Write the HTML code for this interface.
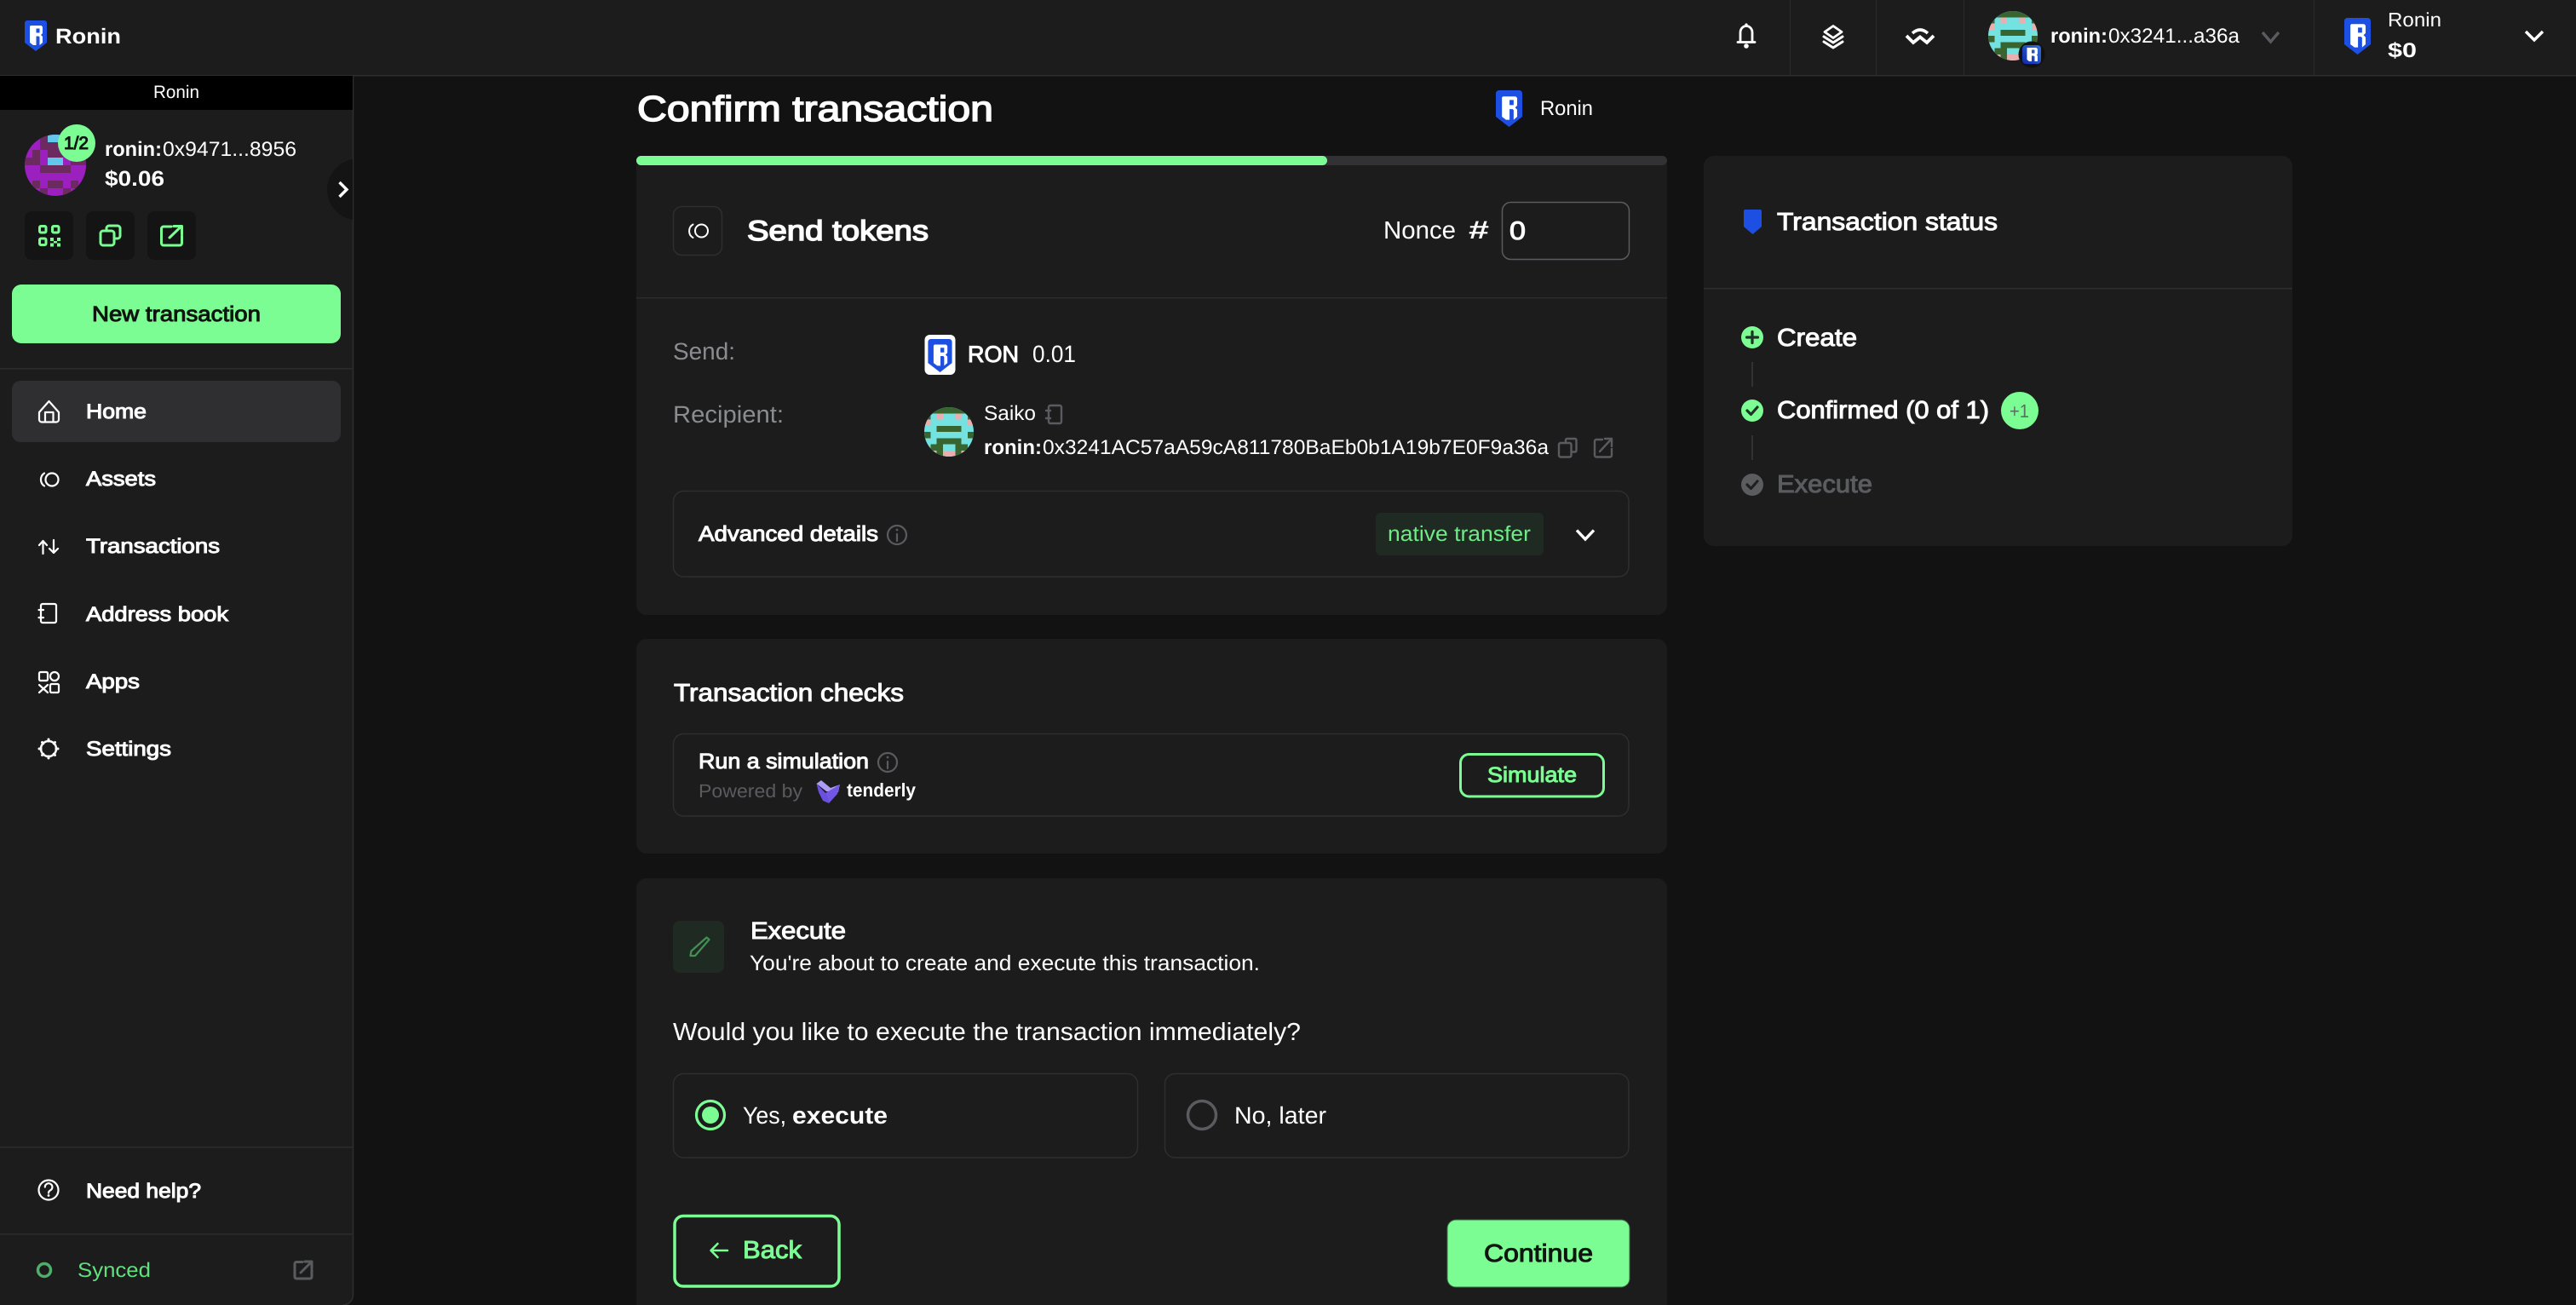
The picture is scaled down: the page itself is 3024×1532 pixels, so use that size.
<!DOCTYPE html>
<html lang="en"><head><meta charset="utf-8"><title>Confirm transaction</title>
<style>
html,body{margin:0;padding:0;background:#121212;width:3024px;height:1532px;overflow:hidden}
svg{display:block;position:absolute;left:0;top:0}
text{font-family:"Liberation Sans",sans-serif;fill:#fff;text-rendering:geometricPrecision}
.b{font-weight:700}
.m{stroke:#fff;stroke-width:1px}
.t{stroke:#fff;stroke-width:1.5px}
.g{fill:#7bfd93}
.gm{fill:#7bfd93;stroke:#7bfd93;stroke-width:1px}
.d{fill:#101510;stroke:#101510;stroke-width:1px}
.s{fill:none;stroke:#fff;stroke-linecap:round;stroke-linejoin:round}
.sg{fill:none;stroke:#7bfd93;stroke-width:3;stroke-linejoin:round;stroke-linecap:round}
.sd{fill:none;stroke:#5a5b5f;stroke-linejoin:round;stroke-linecap:round}
.ln{fill:#2b2b2b}
.bx{fill:none;stroke:#2e2e2e;stroke-width:1.5}
</style></head><body>
<svg width="3024" height="1532" viewBox="0 0 3024 1532" xmlns="http://www.w3.org/2000/svg">
<defs>
<linearGradient id="bl" x1="0" y1="1" x2="1" y2="0"><stop offset="0" stop-color="#1426a8"/><stop offset="1" stop-color="#2d74dc"/></linearGradient>
<symbol id="logo" viewBox="0 0 26 36">
<path d="M3 0H23a3 3 0 0 1 3 3V26L13 36 0 26V3a3 3 0 0 1 3-3z" fill="#1d50e2"/>
<path fill="#fff" fill-rule="evenodd" d="M6 7L7 6H19.5L21 7.5V15L19 17L21 19V26L17.5 29V19.5L16.5 18.5H13.5V29H10L6 26ZM13.5 9.5H17.5V14.5H13.5Z"/>
</symbol>
<clipPath id="cc"><circle cx="4" cy="4" r="4"/></clipPath>
<symbol id="teal" viewBox="0 0 8 8"><g clip-path="url(#cc)" shape-rendering="crispEdges">
<rect width="8" height="8" fill="#74e2e0"/>
<path fill="#38652f" d="M0 0h8v1H0zM0 1h1v1H0zM7 1h1v1H7zM2 3h4v1H2zM0 4h1v1H0zM7 4h1v1H7zM2 5h4v1H2zM1 6h2v1H1zM5 6h2v1H5zM2 7h1v1H2zM5 7h1v1H5z"/>
<path fill="#e9aeb0" d="M2 1h1v1H2zM5 1h1v1H5zM0 2h1v1H0zM7 2h1v1H7zM1 7h1v1H1zM3 7h2v1H3zM6 7h1v1H6z"/>
</g></symbol>
<symbol id="purple" viewBox="0 0 8 8"><g clip-path="url(#cc)" shape-rendering="crispEdges">
<rect width="8" height="8" fill="#9b20bf"/>
<path fill="#6c2a60" d="M2 0h1v1H2zM2 1h3v1H2zM1 2h1v1H1zM3 2h2v1H3zM0 3h2v1H0zM6 3h2v1H6zM2 4h4v1H2zM1 6h1v1H1zM3 6h2v1H3zM6 6h1v1H6zM2 7h1v1H2zM5 7h1v1H5z"/>
<path fill="#63c6ec" d="M3 0h2v1H3zM3 3h2v1H3z"/>
</g></symbol>
</defs>

<!-- header -->
<rect x="0" y="0" width="3024" height="88" fill="#1c1c1c"/>
<rect x="0" y="88" width="3024" height="1.5" fill="#2e2e2e"/>
<rect x="2101" y="0" width="1" height="88" class="ln"/>
<rect x="2202" y="0" width="1" height="88" class="ln"/>
<rect x="2305" y="0" width="1" height="88" class="ln"/>
<rect x="2716" y="0" width="1" height="88" class="ln"/>
<use href="#logo" x="29" y="24" width="26" height="36"/>
<text x="65" y="51" font-size="25" class="b" textLength="77" lengthAdjust="spacingAndGlyphs">Ronin</text>

<!-- bell -->
<path class="s" stroke-width="2.8" d="M2043 49V38a7 7.5 0 0 1 14 0V49"/>
<path class="s" stroke-width="2.8" d="M2040 49.500H2060"/>
<circle cx="2050" cy="54" r="2.800" fill="#fff"/>
<circle cx="2050" cy="29" r="1.600" fill="#fff"/>
<!-- layers -->
<path class="s" stroke-width="2.800" d="M2152 30.500L2162 37.500 2152 44.500 2142 37.500Z"/>
<path class="s" stroke-width="3" d="M2141 43L2152 50 2163 43M2141 49L2152 56 2163 49"/>
<!-- walletconnect -->
<path d="M2245 39Q2254 31 2263 39" fill="none" stroke="#fff" stroke-width="3.600"/>
<path d="M2238 42L2246 50 2254 43.500 2262 50 2270 42" fill="none" stroke="#fff" stroke-width="3.800" stroke-linejoin="miter"/>
<!-- account -->
<use href="#teal" x="2334" y="13" width="58" height="58"/>
<circle cx="2385" cy="64" r="15.500" fill="#111"/>
<rect x="2374" y="53" width="22" height="22" rx="4" fill="url(#bl)"/>
<path fill="#fff" fill-rule="evenodd" d="M2379.500 56H2390.500L2392 57.500V63L2391 64.500 2392 66V72H2388.500V66.500L2387.500 65.500H2385V72H2382L2379.500 70ZM2385 58.500H2388.500V62.500H2385Z"/>
<text x="2407" y="50" font-size="24" class="b" textLength="67" lengthAdjust="spacingAndGlyphs">ronin:</text>
<text x="2475" y="50" font-size="24" textLength="154" lengthAdjust="spacingAndGlyphs">0x3241...a36a</text>
<path d="M2656 38L2665.500 49 2675 38" fill="none" stroke="#5a5b5f" stroke-width="3.400"/>
<use href="#logo" x="2752" y="21" width="31" height="43"/>
<text x="2803" y="31" font-size="23" textLength="63" lengthAdjust="spacingAndGlyphs">Ronin</text>
<text x="2803" y="67" font-size="24" class="b" textLength="34" lengthAdjust="spacingAndGlyphs">$0</text>
<path d="M2965 37L2975 47 2985 37" fill="none" stroke="#fff" stroke-width="3.400"/>

<!-- sidebar -->
<path d="M0 89H414V1520a12 12 0 0 1-12 12H0Z" fill="#1c1c1c"/>
<path d="M414.500 89V1520a12 12 0 0 1-12 12" fill="none" stroke="#2e2e2e" stroke-width="1.500"/>
<rect x="0" y="89" width="414" height="40" fill="#000"/>
<text x="180" y="115" font-size="21" textLength="54" lengthAdjust="spacingAndGlyphs">Ronin</text>
<use href="#purple" x="29" y="158" width="72" height="72"/>
<circle cx="90" cy="168" r="22" fill="#7bfd93"/>
<text x="75" y="175" font-size="21" class="d" textLength="29" lengthAdjust="spacingAndGlyphs">1/2</text>
<text x="123" y="183" font-size="24" class="b" textLength="67" lengthAdjust="spacingAndGlyphs">ronin:</text>
<text x="191" y="183" font-size="24" textLength="157" lengthAdjust="spacingAndGlyphs">0x9471...8956</text>
<text x="123" y="218" font-size="25" class="b" textLength="70" lengthAdjust="spacingAndGlyphs">$0.06</text>
<path d="M414 187A36 36 0 0 0 414 258Z" fill="#141414"/>
<path d="M398.500 214L407 222.500 398.500 231" fill="none" stroke="#fff" stroke-width="3.400"/>

<rect x="29" y="248" width="57" height="57" rx="8" fill="#141414"/>
<rect x="101" y="248" width="57" height="57" rx="8" fill="#141414"/>
<rect x="173" y="248" width="57" height="57" rx="8" fill="#141414"/>
<!-- qr -->
<g class="sg">
<rect x="46.500" y="265.500" width="7.500" height="7.500" rx="1.500"/>
<rect x="61.500" y="265.500" width="7.500" height="7.500" rx="1.500"/>
<rect x="46.500" y="280" width="7.500" height="7.500" rx="1.500"/>
</g>
<path fill="#7bfd93" d="M59 279h4v4h-4zM67 279h4v4h-4zM63 283h4v2.500h-4zM59 285.500h4v4h-4zM67 285.500h4v4h-4z"/>
<!-- copy -->
<path class="sg" d="M125 271V268a3 3 0 0 1 3-3H138a3 3 0 0 1 3 3V277a3 3 0 0 1-3 3H134"/>
<rect class="sg" x="118" y="271" width="16" height="17" rx="3"/>
<!-- ext -->
<path class="sg" d="M201 266H192a2.500 2.500 0 0 0-2.500 2.500V285.500a2.500 2.500 0 0 0 2.500 2.500H211a2.500 2.500 0 0 0 2.500-2.500V277M199 279L213 265.500M204 265.500H213.500V275"/>

<rect x="14" y="334" width="386" height="69" rx="11" fill="#7bfd93"/>
<text x="108" y="377" font-size="25" class="d" textLength="198" lengthAdjust="spacingAndGlyphs">New transaction</text>
<rect x="0" y="432" width="414" height="1.500" class="ln"/>

<rect x="14" y="447" width="386" height="72" rx="10" fill="#2f2f31"/>
<g font-size="24">
<text x="101" y="491" class="m" textLength="71" lengthAdjust="spacingAndGlyphs">Home</text>
<text x="101" y="570" class="m" textLength="82" lengthAdjust="spacingAndGlyphs">Assets</text>
<text x="101" y="649" class="m" textLength="157" lengthAdjust="spacingAndGlyphs">Transactions</text>
<text x="101" y="729" class="m" textLength="167" lengthAdjust="spacingAndGlyphs">Address book</text>
<text x="101" y="808" class="m" textLength="63" lengthAdjust="spacingAndGlyphs">Apps</text>
<text x="101" y="887" class="m" textLength="100" lengthAdjust="spacingAndGlyphs">Settings</text>
<text x="101" y="1406" class="m" textLength="135" lengthAdjust="spacingAndGlyphs">Need help?</text>
</g>
<!-- nav icons -->
<g class="s" stroke-width="2.200">
<path d="M46 484L57.500 471 69 484V492.500a3 3 0 0 1-3 3H49a3 3 0 0 1-3-3Z"/>
<path d="M53 495V484H62.500V495"/>
<circle cx="61" cy="563" r="7.500"/>
<path d="M52 555.500A9 9 0 0 0 52 570.500"/>
<path d="M50.500 650V635M46 640L50.500 635 55 640M63 634V649M58 644L63 649 68 644"/>
<rect x="48" y="709" width="18" height="22" rx="2"/>
<path d="M45.500 716H51M45.500 725H51"/>
<rect x="46" y="789" width="10" height="10" rx="1.500"/>
<circle cx="64" cy="794" r="5"/>
<path d="M46 804L56 813M56 804L46 813"/>
<rect x="59" y="803" width="10" height="10" rx="1.500"/>
<circle cx="57" cy="879" r="9" stroke-width="2.500"/>
<path d="M57 868V870M57 888V890M46 879H48M66 879H68M49.500 871.500L50.800 872.800M64.500 871.500L63.200 872.800M49.500 886.500L50.800 885.200M64.500 886.500L63.200 885.200" stroke-width="3"/>
<circle cx="57" cy="1397" r="11.500"/>
<path d="M52.800 1393.500a4.300 4.300 0 1 1 6.500 3.700c-1.500 .9-2.300 1.500-2.300 3.300"/>
</g>
<circle cx="57" cy="1403.500" r="1.400" fill="#fff"/>
<rect x="0" y="1346" width="414" height="1.500" class="ln"/>
<rect x="0" y="1448" width="414" height="1.500" class="ln"/>
<circle cx="52" cy="1491" r="7.500" fill="none" stroke="#4fae6a" stroke-width="3.500"/>
<text x="91" y="1499" font-size="24" style="fill:#5fe27d" textLength="86" lengthAdjust="spacingAndGlyphs">Synced</text>
<path class="sd" stroke-width="3" d="M355 1481.500H348a2 2 0 0 0-2 2V1499a2 2 0 0 0 2 2H364a2 2 0 0 0 2-2V1491M353 1494L365.500 1481.500M358 1481H366V1489"/>

<!-- main -->
<text x="748" y="142" font-size="42" class="t" textLength="418" lengthAdjust="spacingAndGlyphs">Confirm transaction</text>
<use href="#logo" x="1756" y="106" width="31" height="43"/>
<text x="1808" y="135" font-size="24" textLength="62" lengthAdjust="spacingAndGlyphs">Ronin</text>

<!-- card 1 -->
<rect x="747" y="183" width="1210" height="539" rx="12" fill="#1c1c1c"/>
<rect x="747" y="183" width="1210" height="11" rx="5.500" fill="#323234"/>
<rect x="747" y="183" width="811" height="11" rx="5.500" fill="#7bfd93"/>
<rect x="790.500" y="242.500" width="57" height="57" rx="10" class="bx"/>
<circle cx="823.500" cy="271" r="7.500" class="s" stroke-width="2"/>
<path class="s" stroke-width="2" d="M813.500 263.500A9 9 0 0 0 813.500 279"/>
<text x="877" y="282" font-size="33" class="t" textLength="213" lengthAdjust="spacingAndGlyphs">Send tokens</text>
<text x="1624" y="280" font-size="29" textLength="85" lengthAdjust="spacingAndGlyphs">Nonce</text>
<text x="1724" y="280" font-size="30" class="b" textLength="24" lengthAdjust="spacingAndGlyphs">#</text>
<rect x="1763.500" y="237.500" width="149" height="67" rx="10" fill="none" stroke="#5a5b5f" stroke-width="1.500"/>
<text x="1772" y="281" font-size="30" class="m" textLength="19" lengthAdjust="spacingAndGlyphs">0</text>
<rect x="747" y="349" width="1210" height="1.500" class="ln"/>

<text x="790" y="422" font-size="28" style="fill:#8b8c90" textLength="73" lengthAdjust="spacingAndGlyphs">Send:</text>
<rect x="1085.500" y="393" width="36" height="47" rx="6" fill="#fff"/>
<use href="#logo" x="1089" y="398" width="29" height="39"/>
<text x="1136" y="425" font-size="27" class="m" textLength="60" lengthAdjust="spacingAndGlyphs">RON</text>
<text x="1212" y="425" font-size="28" textLength="51" lengthAdjust="spacingAndGlyphs">0.01</text>

<text x="790" y="496" font-size="28" style="fill:#8b8c90" textLength="130" lengthAdjust="spacingAndGlyphs">Recipient:</text>
<use href="#teal" x="1085" y="478" width="58" height="58"/>
<text x="1155" y="493" font-size="24" textLength="61" lengthAdjust="spacingAndGlyphs">Saiko</text>
<g class="sd" stroke-width="2.400">
<rect x="1231" y="476" width="15" height="21" rx="2"/>
<path d="M1228 482H1233M1228 491H1233"/>
</g>
<text x="1155" y="533" font-size="24" class="b" textLength="68" lengthAdjust="spacingAndGlyphs">ronin:</text>
<text x="1224" y="533" font-size="24" textLength="594" lengthAdjust="spacingAndGlyphs">0x3241AC57aA59cA811780BaEb0b1A19b7E0F9a36a</text>
<g class="sd" stroke-width="2.400">
<path d="M1838 520V516.500a1.500 1.500 0 0 1 1.500-1.500H1849a1.500 1.500 0 0 1 1.500 1.500V529a1.500 1.500 0 0 1-1.500 1.500H1845"/>
<rect x="1830" y="520" width="14.500" height="16.500" rx="2"/>
<path d="M1881 516H1874a2 2 0 0 0-2 2V534.500a2 2 0 0 0 2 2H1890a2 2 0 0 0 2-2V527M1878 530L1891 516M1884 515H1892V524"/>
</g>

<rect x="790.500" y="576.500" width="1121.500" height="100.500" rx="12" class="bx"/>
<text x="820" y="635" font-size="25" class="m" textLength="211" lengthAdjust="spacingAndGlyphs">Advanced details</text>
<circle cx="1053" cy="628" r="11" class="sd" stroke-width="2.200"/>
<path class="sd" stroke-width="2.200" d="M1053 627V635"/>
<circle cx="1053" cy="622" r="1.400" fill="#5a5b5f"/>
<rect x="1615" y="602" width="197" height="50" rx="6" fill="#1f2a23"/>
<text x="1629" y="635" font-size="25" style="fill:#70e987" textLength="168" lengthAdjust="spacingAndGlyphs">native transfer</text>
<path d="M1851 622.500L1861 633 1871 622.500" fill="none" stroke="#fff" stroke-width="3.400"/>

<!-- card 2 -->
<rect x="747" y="750" width="1210" height="252" rx="12" fill="#1c1c1c"/>
<text x="791" y="823" font-size="29" class="m" textLength="270" lengthAdjust="spacingAndGlyphs">Transaction checks</text>
<rect x="790.500" y="861.500" width="1121.500" height="96.500" rx="12" class="bx"/>
<text x="820" y="902" font-size="25" class="m" textLength="200" lengthAdjust="spacingAndGlyphs">Run a simulation</text>
<circle cx="1042" cy="895" r="11" class="sd" stroke-width="2.200"/>
<path class="sd" stroke-width="2.200" d="M1042 894V902"/>
<circle cx="1042" cy="889" r="1.400" fill="#5a5b5f"/>
<text x="820" y="936" font-size="22" style="fill:#5a5b5f" textLength="122" lengthAdjust="spacingAndGlyphs">Powered by</text>
<path d="M958.500 920L964 916 975 925 986 921 984 930 970 929Z" fill="#ad9df3"/>
<path d="M958.500 920L969 931 973 943 966 940 961 930Z" fill="#6a4fe0"/>
<path d="M986 921L983 932 973 943 969 931Z" fill="#7257e6"/>
<text x="994" y="935" font-size="22" class="b" textLength="81" lengthAdjust="spacingAndGlyphs">tenderly</text>
<rect x="1714.500" y="885.500" width="168" height="49.500" rx="10" class="sg"/>
<text x="1746" y="918" font-size="25" class="gm" textLength="105" lengthAdjust="spacingAndGlyphs">Simulate</text>

<!-- card 3 -->
<path d="M747 1532V1043a12 12 0 0 1 12-12H1945a12 12 0 0 1 12 12V1532Z" fill="#1c1c1c"/>
<rect x="790" y="1081" width="60" height="61" rx="8" fill="#1f2a23"/>
<path d="M829.500 1100.500L832.500 1103 816 1122H810.500L811.500 1116.500Z" fill="none" stroke="#438f55" stroke-width="2.200" stroke-linejoin="round"/>
<text x="881" y="1102" font-size="28" class="m" textLength="112" lengthAdjust="spacingAndGlyphs">Execute</text>
<text x="880" y="1139" font-size="25" textLength="599" lengthAdjust="spacingAndGlyphs">You're about to create and execute this transaction.</text>
<text x="790" y="1221" font-size="29" textLength="737" lengthAdjust="spacingAndGlyphs">Would you like to execute the transaction immediately?</text>
<rect x="790.500" y="1260.500" width="545" height="98.500" rx="12" class="bx"/>
<rect x="1367.500" y="1260.500" width="544.500" height="98.500" rx="12" class="bx"/>
<circle cx="834" cy="1309" r="16.500" fill="none" stroke="#7bfd93" stroke-width="3.200"/>
<circle cx="834" cy="1309" r="10" fill="#7bfd93"/>
<circle cx="1411" cy="1309" r="16.500" fill="none" stroke="#5a5b5f" stroke-width="3.500"/>
<text x="872" y="1319" font-size="28" textLength="51" lengthAdjust="spacingAndGlyphs">Yes,</text>
<text x="930" y="1319" font-size="28" class="b" textLength="112" lengthAdjust="spacingAndGlyphs">execute</text>
<text x="1449" y="1319" font-size="28" textLength="108" lengthAdjust="spacingAndGlyphs">No, later</text>
<rect x="792" y="1427.500" width="193" height="82.500" rx="10" class="sg" style="stroke-width:3.500px"/>
<path d="M854 1468H835M842.500 1460L834.500 1468 842.500 1476" fill="none" stroke="#7bfd93" stroke-width="2.500" stroke-linecap="round" stroke-linejoin="round"/>
<text x="872" y="1477" font-size="29" class="gm" textLength="69" lengthAdjust="spacingAndGlyphs">Back</text>
<rect x="1699" y="1432" width="214" height="79" rx="10" fill="#7bfd93" stroke="#3c6b47" stroke-width="1"/>
<text x="1742" y="1481" font-size="29" class="d" textLength="128" lengthAdjust="spacingAndGlyphs">Continue</text>

<!-- status card -->
<rect x="2000" y="183" width="691" height="458" rx="12" fill="#1c1c1c"/>
<path d="M2049 246H2066a2 2 0 0 1 2 2V266L2057.500 275 2047 266V248a2 2 0 0 1 2-2z" fill="#1d50e2"/>
<text x="2086" y="270" font-size="29" class="m" textLength="259" lengthAdjust="spacingAndGlyphs">Transaction status</text>
<rect x="2000" y="338" width="691" height="1.500" fill="#2e2e2e"/>
<circle cx="2057" cy="396" r="13" fill="#7bfd93"/>
<path d="M2057 389.500V402.500M2050.500 396H2063.500" stroke="#1f3325" stroke-width="3.200" fill="none" stroke-linecap="round"/>
<text x="2086" y="406" font-size="29" class="m" textLength="94" lengthAdjust="spacingAndGlyphs">Create</text>
<rect x="2056" y="425" width="2" height="29" fill="#323234"/>
<circle cx="2057" cy="482" r="13" fill="#7bfd93"/>
<path d="M2051 482L2055.500 486.500 2063 478" stroke="#1f3325" stroke-width="3.200" fill="none" stroke-linecap="round" stroke-linejoin="round"/>
<text x="2086" y="491" font-size="29" class="m" textLength="249" lengthAdjust="spacingAndGlyphs">Confirmed (0 of 1)</text>
<circle cx="2371" cy="482" r="22" fill="#7bfd93"/>
<text x="2359" y="490" font-size="22" style="fill:#5b6f60" textLength="23" lengthAdjust="spacingAndGlyphs">+1</text>
<rect x="2056" y="511" width="2" height="29" fill="#323234"/>
<circle cx="2057" cy="569" r="13" fill="#5b5c60"/>
<path d="M2051 569L2055.500 573.500 2063 565" stroke="#1f2020" stroke-width="3.200" fill="none" stroke-linecap="round" stroke-linejoin="round"/>
<text x="2086" y="578" font-size="29" style="fill:#5b5c60;stroke:#5b5c60;stroke-width:1px" textLength="112" lengthAdjust="spacingAndGlyphs">Execute</text>
</svg>
</body></html>
